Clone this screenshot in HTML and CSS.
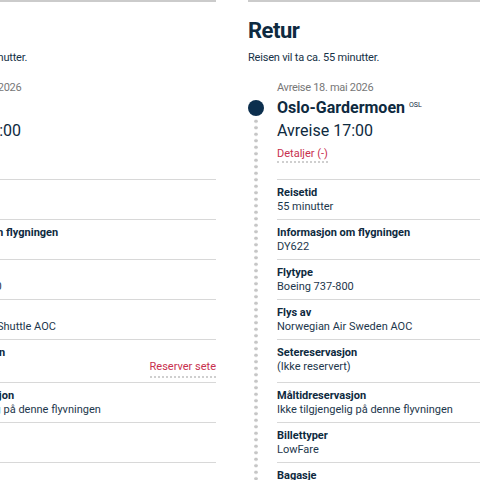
FILE: index.html
```html
<!DOCTYPE html>
<html lang="no">
<head>
<meta charset="utf-8">
<link rel="stylesheet" href="styles.css">
</head>
<body>
<div class="page">
  <section class="col">
    <h2 class="title">Utreise</h2>
    <p class="lead">Reisen vil ta ca. 50 minutter.</p>
    <div class="leg">
      <div class="date">Avreise 11. mai 2026</div>
      <div class="leg-body">
        <div class="track"><span class="dot"></span><span class="dots"></span></div>
        <div class="info">
          <div class="airport">Bergen <sup>BGO</sup></div>
          <div class="time">Avreise 11:00</div>
          <div class="details"><a class="link">Detaljer (-)</a></div>
          <div class="rows">
            <div class="row"><div class="label">Reisetid</div><div class="value">50 minutter</div></div>
            <div class="row"><div class="label">Informasjon om flygningen</div><div class="value">DY605</div></div>
            <div class="row"><div class="label">Flytype</div><div class="value">Boeing 737-800</div></div>
            <div class="row"><div class="label">Flys av</div><div class="value">Norwegian Air Shuttle AOC</div></div>
            <div class="row"><div class="label">Setereservasjon</div><div class="value split"><span>(Ikke reservert)</span><a class="link">Reserver sete</a></div></div>
            <div class="row"><div class="label">Måltidreservasjon</div><div class="value">Ikke tilgjengelig på denne flyvningen</div></div>
            <div class="row"><div class="label">Billettyper</div><div class="value">LowFare</div></div>
            <div class="row"><div class="label">Bagasje</div><div class="value">1 håndbagasje</div></div>
          </div>
        </div>
      </div>
    </div>
  </section>
  <section class="col">
    <h2 class="title">Retur</h2>
    <p class="lead">Reisen vil ta ca. 55 minutter.</p>
    <div class="leg">
      <div class="date">Avreise 18. mai 2026</div>
      <div class="leg-body">
        <div class="track"><span class="dot"></span><span class="dots"></span></div>
        <div class="info">
          <div class="airport">Oslo-Gardermoen <sup>OSL</sup></div>
          <div class="time">Avreise 17:00</div>
          <div class="details"><a class="link">Detaljer (-)</a></div>
          <div class="rows">
            <div class="row"><div class="label">Reisetid</div><div class="value">55 minutter</div></div>
            <div class="row"><div class="label">Informasjon om flygningen</div><div class="value">DY622</div></div>
            <div class="row"><div class="label">Flytype</div><div class="value">Boeing 737-800</div></div>
            <div class="row"><div class="label">Flys av</div><div class="value">Norwegian Air Sweden AOC</div></div>
            <div class="row"><div class="label">Setereservasjon</div><div class="value split"><span>(Ikke reservert)</span><a class="link">Reserver sete</a></div></div>
            <div class="row"><div class="label">Måltidreservasjon</div><div class="value">Ikke tilgjengelig på denne flyvningen</div></div>
            <div class="row"><div class="label">Billettyper</div><div class="value">LowFare</div></div>
            <div class="row"><div class="label">Bagasje</div><div class="value">1 håndbagasje</div></div>
          </div>
        </div>
      </div>
    </div>
  </section>
</div>
</body>
</html>
```
FILE: styles.css
```css
html, body {
  margin: 0;
  padding: 0;
  background: #fff;
  overflow: hidden;
}
body {
  font-family: Roboto, "Noto Sans", sans-serif;
  color: #0f2b42;
  width: 480px;
  height: 480px;
}
.page {
  display: flex;
  gap: 32px;
  margin-left: -104px;
}
.col {
  flex: none;
  width: 320px;
  border-top: 2px solid #cbcbcb;
}
.title {
  margin: 16px 0 0;
  font-size: 22px;
  line-height: 26px;
  font-weight: 700;
  letter-spacing: -0.5px;
  color: #0e2a40;
}
.lead {
  margin: 6px 0 0;
  font-size: 11px;
  line-height: 16px;
  letter-spacing: -0.2px;
  color: #173247;
}
.leg {
  margin-top: 14px;
}
.date {
  margin-left: 29px;
  font-size: 11px;
  line-height: 16px;
  letter-spacing: -0.3px;
  color: #777;
}
.leg-body {
  display: flex;
}
.track {
  flex: none;
  width: 16px;
  margin-right: 13px;
  display: flex;
  flex-direction: column;
  align-items: center;
}
.dot {
  display: block;
  width: 16px;
  height: 16px;
  border-radius: 50%;
  background: #0c2f4e;
  margin-top: 4px;
}
.dots {
  display: block;
  flex: 1;
  width: 4px;
  margin-top: 2px;
  background-image: radial-gradient(circle, #c6c6c6 1.5px, transparent 2px);
  background-size: 4px 6.5px;
  background-repeat: repeat-y;
}
.info {
  flex: 1;
  min-width: 0;
}
.airport {
  font-size: 16px;
  line-height: 24px;
  font-weight: 700;
  color: #0e2a40;
}
.airport sup {
  font-size: 7px;
  font-weight: 400;
  vertical-align: 6px;
  line-height: 0;
}
.time {
  font-size: 16px;
  line-height: 22px;
  color: #0e2a40;
}
.details {
  margin-top: 4px;
  font-size: 11px;
  line-height: 16px;
}
.link {
  color: #c8304e;
  border-bottom: 2px dotted #cfcfcf;
  padding-bottom: 1px;
}
.rows {
  margin-top: 17px;
}
.row {
  border-top: 1px solid #d8d8d8;
  padding: 6px 0 4px;
}
.label {
  font-size: 11px;
  line-height: 13px;
  font-weight: 700;
  color: #0e2a40;
}
.value {
  font-size: 11px;
  line-height: 16px;
  color: #1d374c;
}
.split {
  display: flex;
  justify-content: space-between;
}
```
